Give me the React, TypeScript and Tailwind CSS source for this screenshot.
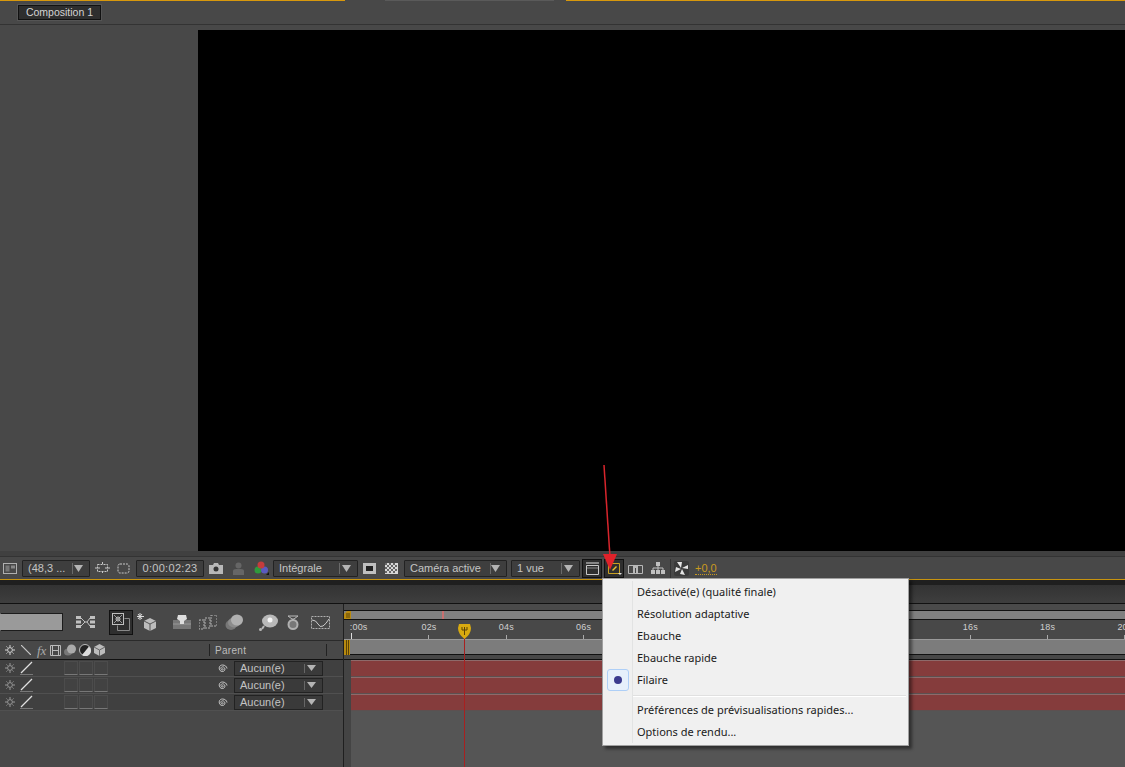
import React from 'react';

const ui = "font-['Liberation_Sans',Arial,sans-serif]";

const Dropdown = ({ label, w, sep }: { label: string; w: string; sep: string }) => (
  <div className={`relative flex h-[17px] items-center rounded-[1px] border border-[#222] bg-[#3e3e3e] pl-[5px] text-[11px] text-[#c4c4c4] ${w}`}>
    <span className="whitespace-nowrap">{label}</span>
    <span className={`absolute top-[2px] h-[11px] w-px bg-[#6a6a6a] ${sep}`} />
    <svg className="absolute right-[6px] top-[4px]" width="9" height="7" viewBox="0 0 9 7"><path d="M0 0h9L4.500 7z" fill="#b4b4b4" /></svg>
  </div>
);

const Svg = ({ w, h, className = '', children }: { w: number; h: number; className?: string; children: React.ReactNode }) => (
  <svg width={w} height={h} viewBox={`0 0 ${w} ${h}`} className={`shrink-0 ${className}`} fill="none">{children}</svg>
);

const Sun = ({ color = '#c8c8c8' }: { color?: string }) => (
  <Svg w={10} h={10}>
    <circle cx="5" cy="5" r="2.400" stroke={color} />
    <path d="M5 0v2M5 8v2M0 5h2M8 5h2M1.500 1.500l1 1M7.500 7.500l1 1M1.500 8.500l1-1M7.500 2.500l1-1" stroke={color} />
  </Svg>
);

const ViewerToolbar = () => (
  <div className="flex h-[22px] items-center bg-[#484848] pl-[3px] text-[#c4c4c4]">
    <Svg w={14} h={11}>
      <rect x=".5" y=".5" width="13" height="10" stroke="#b0b0b0" />
      <rect x="2.500" y="2.500" width="4" height="6" fill="#777" />
      <rect x="8" y="2.500" width="4" height="3" fill="#888" />
    </Svg>
    <Dropdown label=" (48,3 ..." w="w-[68px] ml-[5px]" sep="left-[49px]" />
    <Svg w={15} h={12} className="ml-[5px]">
      <path d="M2.500 2.500h10v7h-10zM0 6h5M10 6h5M7.500 0v3M7.500 9v3" stroke="#c8c8c8" strokeDasharray="2 1" />
    </Svg>
    <Svg w={13} h={11} className="ml-[7px]">
      <rect x="1" y="1" width="11" height="9" rx="2" stroke="#c8c8c8" strokeDasharray="2 1" />
    </Svg>
    <div className="ml-[6px] flex h-[17px] w-[68px] items-center justify-center rounded-[1px] border border-[#222] bg-[#3e3e3e] text-[11px] tracking-[0.3px]">0:00:02:23</div>
    <Svg w={14} h={11} className="ml-[5px]">
      <path d="M0 2h4l1-2h4l1 2h4v9H0z" fill="#b8b8b8" />
      <circle cx="7" cy="6" r="2.500" fill="#333" />
    </Svg>
    <Svg w={11} h={13} className="ml-[10px]">
      <circle cx="5.500" cy="3.500" r="3" fill="#666" />
      <path d="M0 13V9q0-2 3-2h5q3 0 3 2v4z" fill="#666" />
    </Svg>
    <Svg w={15} h={14} className="ml-[10px]">
      <circle cx="4" cy="9" r="3.500" fill="#2f9a3c" />
      <circle cx="10.500" cy="9" r="3.500" fill="#5a5ac0" />
      <circle cx="7" cy="4" r="3.500" fill="#c43c3c" />
      <path d="M12 14h3v-3z" fill="#111" />
    </Svg>
    <Dropdown label="Intégrale" w="w-[85px] ml-[4px]" sep="left-[65px]" />
    <Svg w={13} h={11} className="ml-[5px]">
      <rect width="13" height="11" fill="#c0c0c0" />
      <rect x="3" y="3" width="7" height="5" fill="#222" />
    </Svg>
    <Svg w={13} h={11} className="ml-[9px]">
      <rect width="13" height="11" fill="#d8d8d8" />
      <path d="M0 0h2v2H0zM4 0h2v2H4zM8 0h2v2H8zM2 2h2v2H2zM6 2h2v2H6zM10 2h2v2h-2zM0 4h2v2H0zM4 4h2v2H4zM8 4h2v2H8zM2 6h2v2H2zM6 6h2v2H6zM10 6h2v2h-2zM0 8h2v2H0zM4 8h2v2H4zM8 8h2v2H8z" fill="#666" />
    </Svg>
    <Dropdown label="Caméra active" w="w-[103px] ml-[6px]" sep="left-[85px]" />
    <Dropdown label="1 vue" w="w-[69px] ml-[4px]" sep="left-[49px]" />
    <div className="ml-[2px] flex h-[19px] w-[20px] items-center justify-center border border-[#111] bg-[#2e2e2e]">
      <Svg w={13} h={13}>
        <path d="M.5 3.500h12v9H.500z" stroke="#c8c8c8" />
        <path d="M0 1h13" stroke="#e0e0e0" />
        <path d="M1 6h11" stroke="#888" />
      </Svg>
    </div>
    <div className="ml-[2px] flex h-[19px] w-[20px] items-center justify-center border border-[#111] bg-[#2e2e2e]">
      <Svg w={15} h={13}>
        <path d="M1.500 1.500h11v10h-11z" stroke="#c8a020" />
        <path d="M5 8l4-4 1 1-4 4z" fill="#e8c030" />
        <path d="M11 11h4l-2 2z" fill="#ddd" />
      </Svg>
    </div>
    <Svg w={15} h={11} className="ml-[4px]">
      <path d="M.5 2.500h14v8H.500z" stroke="#b8b8b8" />
      <path d="M5 3h5v8H5z" fill="#b8b8b8" />
      <path d="M7.500 5v5" stroke="#444" />
    </Svg>
    <Svg w={14} h={12} className="ml-[8px]">
      <path d="M5 0h4v4H5zM0 8h4v4H0zM5 8h4v4H5zM10 8h4v4h-4z" fill="#c0c0c0" />
      <path d="M7 4v2M2 8V6h10v2M7 6v2" stroke="#c0c0c0" />
    </Svg>
    <span className="ml-[5px] h-[19px] w-px bg-[#333]" />
    <Svg w={15} h={15} className="ml-[3px]">
      <rect width="15" height="15" rx="2" fill="#3a3a3a" />
      <path d="M7 7L3 1h5zM8 7l6-3v4zM8 8l3 6-5-1zM7 8l-6 3 1-5z" fill="#e4e4e4" />
    </Svg>
    <span className="ml-[6px] border-b border-dotted border-[#c89a20] text-[11px] leading-[12px] text-[#c89a20]">+0,0</span>
  </div>
);

const LayerToolbar = () => (
  <div className="flex h-[37px] items-center border-b border-[#2a2a2a]">
    <div className="h-[18px] w-[63px] border border-y-[#1c1c1c] border-r-[#1c1c1c] border-l-transparent bg-[#9a9a9a]" />
    <Svg w={24} h={14} className="ml-[12px]">
      <path d="M1 1h5v3H1zM1 5.500h5v3H1zM1 10h5v3H1zM15 1h5v3h-5zM15 5.500h5v3h-5zM15 10h5v3h-5z" fill="#c0c0c0" />
      <path d="M6 3l4 4h2l3-4M6 11l4-4M12 7l3 4" stroke="#c0c0c0" />
    </Svg>
    <div className="ml-[10px] flex h-[25px] w-[24px] items-center justify-center border border-[#111] bg-[#2e2e2e]">
      <Svg w={18} h={18}>
        <rect x=".5" y=".5" width="11" height="11" stroke="#c0c0c0" />
        <path d="M2 2l8 8M10 2l-8 8" stroke="#999" />
        <circle cx="6" cy="6" r="2" stroke="#ccc" />
        <path d="M12.500 5.500h5v12h-12v-5" stroke="#888" />
      </Svg>
    </div>
    <Svg w={19} h={18} className="ml-[4px]">
      <path d="M3 0v7M0 3.500h7M1 1l4 5M5 1L1 6" stroke="#ddd" />
      <path d="M13 5l6 3v7l-6 3-6-3V8z" fill="#bcbcbc" />
      <path d="M7 8l6 3 6-3M13 11v7" stroke="#555" />
    </Svg>
    <Svg w={18} h={14} className="ml-[17px]">
      <path d="M0 5h18v9H0z" fill="#777" />
      <path d="M0 9h18" stroke="#999" />
      <path d="M5 0h8l1 4-3 2v3H7V6L4 4z" fill="#ddd" />
    </Svg>
    <Svg w={18} h={15} className="ml-[8px]">
      <path d="M0 5h5v9H0zM6 3h5v10H6zM12 0h6v11h-6z" stroke="#b0b0b0" strokeDasharray="2 1" />
    </Svg>
    <Svg w={18} h={17} className="ml-[8px]">
      <ellipse cx="6" cy="11" rx="5.500" ry="5" fill="#777" />
      <ellipse cx="9" cy="8.500" rx="6" ry="5" fill="#8c8c8c" />
      <ellipse cx="12" cy="6" rx="6" ry="5.500" fill="#b0b0b0" />
    </Svg>
    <Svg w={19} h={17} className="ml-[16px]">
      <ellipse cx="11" cy="7" rx="8" ry="6.500" fill="#b8b8b8" />
      <circle cx="11" cy="6" r="2.500" fill="#f4f4f4" />
      <path d="M5 12l-2 3" stroke="#b8b8b8" strokeWidth="2" />
      <circle cx="1.500" cy="15.500" r="1.500" fill="#b8b8b8" />
    </Svg>
    <Svg w={14} h={15} className="ml-[8px]">
      <circle cx="7" cy="9.500" r="4.500" stroke="#b0b0b0" strokeWidth="2" fill="#777" />
      <path d="M2 1h10L8 4H6z" stroke="#bbb" />
    </Svg>
    <Svg w={19} h={15} className="ml-[11px]">
      <path d="M.5 1.500h18v12H.500z" stroke="#b0b0b0" strokeDasharray="2 1" />
      <path d="M1 5q4 0 6 4t5 2 6-7" stroke="#ccc" />
    </Svg>
  </div>
);

const ColumnHeader = () => (
  <div className="flex h-[19px] items-center border-b border-[#111] pl-[5px]">
    <Sun color="#d8d8d8" />
    <Svg w={10} h={10} className="ml-[6px]"><path d="M0 0l10 10" stroke="#c8c8c8" strokeWidth="1.200" /></Svg>
    <span className="ml-[6px] w-[10px] font-['Liberation_Serif',serif] text-[13px] italic leading-none text-[#aaa]">fx</span>
    <Svg w={11} h={11} className="ml-[3px]">
      <path d="M.5.500h10v10H.500z" stroke="#bbb" />
      <path d="M2.500 1v9M8.500 1v9M3 5.500h5" stroke="#bbb" />
    </Svg>
    <Svg w={12} h={12} className="ml-[3px]">
      <ellipse cx="4" cy="8" rx="4" ry="3.500" fill="#777" />
      <ellipse cx="7.500" cy="5" rx="4.500" ry="4.500" fill="#aaa" />
    </Svg>
    <Svg w={12} h={12} className="ml-[3px]">
      <circle cx="6" cy="6" r="5.500" fill="#222" stroke="#bbb" />
      <path d="M10 2.500A5.500 5.500 0 0 1 3 11z" fill="#ddd" />
    </Svg>
    <Svg w={11} h={12} className="ml-[3px]">
      <path d="M5.500 0l5.500 3v6l-5.500 3L0 9V3z" fill="#bcbcbc" />
      <path d="M0 3l5.500 3L11 3M5.500 6v6" stroke="#666" />
    </Svg>
    <span className="ml-[104px] h-[12px] w-px bg-[#222]" />
    <span className="ml-[5px] w-[111px] text-[10px] tracking-[0.3px] text-[#bcbcbc]">Parent</span>
    <span className="h-[12px] w-px bg-[#222]" />
  </div>
);

const LayerRow = () => (
  <div className="flex h-[17px] items-center border-b border-[#505050] bg-[#404040] pl-[5px]">
    <Sun color="#999" />
    <Svg w={13} h={14} className="ml-[5px]">
      <path d="M1 12L12 1" stroke="#e0e0e0" strokeWidth="1.300" />
      <path d="M0 13.500h13" stroke="#777" />
    </Svg>
    <div className="ml-[31px] flex gap-px">
      {[0, 1, 2].map((i) => (
        <div key={i} className="h-[14px] w-[14px] border border-[#4c4c4c] border-b-[#777] bg-[#424242]" />
      ))}
    </div>
    <Svg w={11} h={11} className="ml-[109px]">
      <path d="M5.500 5.500c1 0 1.200 1.500-.2 1.500-1.800 0-2-3.200.2-3.200 3 0 3.500 4.700-.2 4.700C1.500 8.500.8 2 5.500 2c2.500 0 4.200 1.500 4.500 3.500" stroke="#c8c8c8" />
    </Svg>
    <div className="relative ml-[6px] flex h-[15px] w-[89px] items-center border border-[#222] bg-[#3a3a3a] pl-[5px] text-[11px] text-[#c4c4c4]">
      Aucun(e)
      <span className="absolute left-[69px] top-[2px] h-[9px] w-px bg-[#666]" />
      <svg className="absolute right-[6px] top-[3px]" width="9" height="6" viewBox="0 0 9 6"><path d="M0 0h9L4.500 6z" fill="#b4b4b4" /></svg>
    </div>
  </div>
);

// 08s to 14s sit behind the open menu
const times = ['00s', '02s', '04s', '06s', '', '', '', '', '16s', '18s', '20s'];

const Timeline = () => (
  <div className="flex flex-1 flex-col overflow-hidden">
    <div className="h-[6px] bg-[#4a4a4a]" />
    <div className="relative h-[10px] border-y border-[#111] bg-[#808080]">
      <svg className="absolute left-0 top-0" width="7" height="8" viewBox="0 0 7 8"><path d="M0 8V3l3-3h4v8z" fill="#b88a10" /><path d="M3 2v5M5 2v5" stroke="#5a4206" /></svg>
      <span className="absolute left-[98px] top-0 h-[8px] w-[2px] bg-[#c87070]" />
    </div>
    <div className="-ml-[31px] flex h-[19px] bg-[#484848]">
      {times.map((t, i) => (
        <div key={i} className="flex w-[77.33px] shrink-0 flex-col items-center">
          <span className={`h-[13px] whitespace-nowrap pt-[1px] text-[9px] leading-[12px] tracking-[0.2px] text-[#d0d0d0] ${i === 0 ? 'ml-[14px]' : ''}`}>{i === 0 ? ':' + t : t}</span>
          <span className={i === 0 ? 'h-[6px] w-px bg-[#ddd]' : 'mt-[2px] h-[4px] w-px bg-[#aaa]'} />
        </div>
      ))}
    </div>
    <div className="relative h-[16px] border-y border-y-[#111] border-t-[#999] bg-[#7c7c7c]">
      <div className="absolute left-0 top-0 flex h-[15px] w-[6px] justify-center gap-px bg-[#b88a10]">
        <span className="w-px bg-[#5a4206]" />
        <span className="w-px bg-[#5a4206]" />
      </div>
    </div>
    <div className="h-[5px] border-b border-[#111] bg-[#484848]" />
    <div className="flex flex-1">
      <div className="w-[7px] bg-[#444]" />
      <div className="flex flex-1 flex-col bg-[#555]">
        {[0, 1, 2].map((i) => (
          <div key={i} className="h-[17px] border-t border-b border-t-[#8e6a6a] border-b-[#5c5050] bg-[#853c3c]" />
        ))}
      </div>
    </div>
  </div>
);

const items = ['Désactivé(e) (qualité finale)', 'Résolution adaptative', 'Ebauche', 'Ebauche rapide', 'Filaire'];
const items2 = ['Préférences de prévisualisations rapides...', 'Options de rendu...'];

const MenuItem = ({ label, checked }: { label: string; checked?: boolean }) => (
  <div className="flex h-[22px] items-center">
    <div className="flex w-[29px] shrink-0 justify-center">
      {checked && (
        <div className="flex h-[22px] w-[22px] items-center justify-center rounded-[3px] border border-[#aecff7] bg-[#e6f0fb]">
          <span className="h-[8px] w-[8px] rounded-full bg-[#3a3a8e]" />
        </div>
      )}
    </div>
    <span className="ml-[5px] whitespace-nowrap">{label}</span>
  </div>
);

const ContextMenu = () => (
  <div className="absolute left-[602px] top-[578px] w-[307px] border border-[#a0a0a0] bg-[#f0f0f0] py-[2px] font-['Noto_Sans',sans-serif] text-[11px] text-[#1a1a1a] shadow-[3px_3px_3px_rgba(0,0,0,0.45)]">
    <span className="absolute bottom-[2px] left-[29px] top-[2px] w-px bg-[#e2e3e3]" />
    {items.map((l) => <MenuItem key={l} label={l} checked={l === 'Filaire'} />)}
    <div className="mb-[2px] ml-[30px] mr-[2px] mt-[4px] h-[2px] border-b border-white bg-[#e0e0e0]" />
    {items2.map((l) => <MenuItem key={l} label={l} />)}
  </div>
);

export default function App() {
  return (
    <div className={`relative h-[767px] w-[1125px] overflow-hidden bg-[#484848] ${ui}`}>
      <div className="flex h-px">
        <div className="w-[345px] bg-[#d8980c]" />
        <div className="w-[40px]" />
        <div className="w-[169px] bg-[#5a5a5a]" />
        <div className="w-[12px]" />
        <div className="flex-1 bg-[#d8980c]" />
      </div>
      <div className="h-[24px] border-b border-[#333] pl-[18px] pt-[4px]">
        <div className="flex h-[15px] w-[83px] items-center justify-center border border-[#111] bg-[#2e2e2e] text-[10.5px] text-[#d4d4d4] outline outline-1 outline-[#555]">Composition 1</div>
      </div>
      <div className="h-[5px]" />
      <div className="h-[521px] pl-[198px]"><div className="h-full bg-black" /></div>
      <div className="h-[6px] border-b border-[#333] bg-[#404040]" />
      <ViewerToolbar />
      <div className="h-[6px] border-t border-[#c8940f] bg-[#1f1f1f]" />
      <div className="h-[19px] border-b border-[#111] bg-gradient-to-b from-[#333] to-[#3e3e3e]" />
      <div className="flex h-[163px]">
        <div className="flex w-[344px] shrink-0 flex-col border-r border-[#1f1f1f]">
          <LayerToolbar />
          <ColumnHeader />
          <LayerRow />
          <LayerRow />
          <LayerRow />
        </div>
        <Timeline />
      </div>

      <div className="absolute left-[464px] top-[630px] h-[137px] w-px bg-[#a82020]" />
      <svg className="absolute left-[458px] top-[624px]" width="13" height="15" viewBox="0 0 13 15">
        <path d="M1 0h11l1 4q0 6-6.500 11Q0 10 0 4z" fill="#d8aa10" />
        <path d="M4 3v3M6.500 3v8M9 3v3M4 6h5" stroke="#5a4206" />
      </svg>
      <svg className="absolute left-[598px] top-[462px]" width="24" height="112" viewBox="0 0 24 112">
        <path d="M6 3l6 92" stroke="#d8252c" strokeWidth="1.500" />
        <path d="M5 92h14l-7 16z" fill="#e0222a" />
      </svg>
      <ContextMenu />
    </div>
  );
}
